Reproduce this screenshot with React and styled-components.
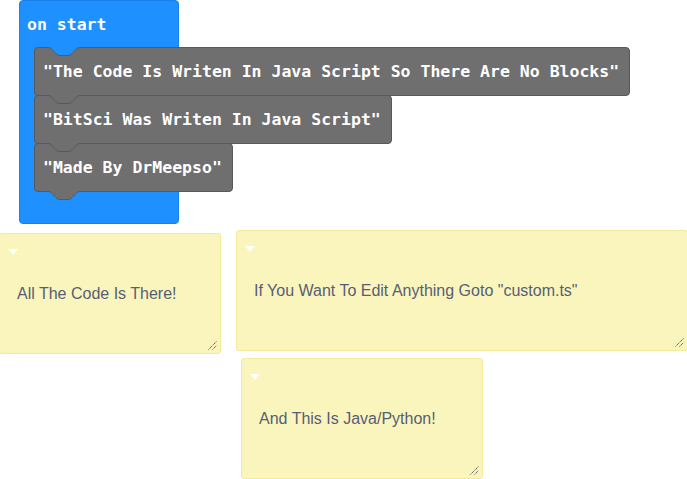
import React from "react";
import styled, { createGlobalStyle } from "styled-components";

const GlobalStyle = createGlobalStyle`
  html, body { margin: 0; padding: 0; background: #ffffff; }
  #root { width: 687px; height: 479px; }
`;

const Workspace = styled.div`
  position: relative;
  width: 687px;
  height: 479px;
  overflow: hidden;
  background: #ffffff;
`;

const EventBlock = styled.div`
  position: absolute;
  left: ${(p) => p.$x}px;
  top: ${(p) => p.$y}px;
  box-sizing: border-box;
  width: 160px;
  display: flex;
  flex-direction: column;
  align-items: flex-start;
  background: #1e90ff;
  border: 1px solid #1a80e6;
  border-radius: 4px;
`;

const EventHeader = styled.div`
  height: 46px;
  display: flex;
  align-items: center;
  padding-left: 7px;
  color: #ffffff;
  font-family: "DejaVu Sans Mono", "Liberation Mono", monospace;
  font-weight: bold;
  font-size: 16.5px;
  white-space: pre;
`;

const Stack = styled.div`
  display: flex;
  flex-direction: column;
  align-items: flex-start;
  margin-left: 14px;
  width: max-content;
`;

const Statement = styled.div`
  position: relative;
  box-sizing: border-box;
  height: 49px;
  display: flex;
  align-items: center;
  padding: 0 10px 0 8px;
  background: #6f6f6f;
  border: 1px solid #595959;
  border-radius: 4px;
  color: #ffffff;
  font-family: "DejaVu Sans Mono", "Liberation Mono", monospace;
  font-weight: bold;
  font-size: 16.5px;
  white-space: pre;

  & + & {
    margin-top: -1px;
  }
`;

const NotchSvg = styled.svg`
  position: absolute;
  left: 13px;
  top: ${(p) => (p.$bottom ? "100%" : "-1px")};
  z-index: 1;
  overflow: visible;
`;

const EventFooter = styled.div`
  height: 31px;
`;

const Comment = styled.div`
  position: absolute;
  left: ${(p) => p.$x}px;
  top: ${(p) => p.$y}px;
  width: ${(p) => p.$w}px;
  height: ${(p) => p.$h}px;
  box-sizing: border-box;
  display: flex;
  flex-direction: column;
  background: #faf5bd;
  border: 1px solid #f3ea9b;
  border-radius: 3px;
`;

const CommentBar = styled.div`
  box-sizing: border-box;
  height: 34px;
  padding: 15px 0 0 8px;
`;

const Collapse = styled.span`
  display: block;
  width: 0;
  height: 0;
  border-left: 5px solid transparent;
  border-right: 5px solid transparent;
  border-top: 6px solid #ffffff;
`;

const CommentText = styled.div`
  padding: 17px 17px 0;
  font-family: "Liberation Sans", Arial, sans-serif;
  font-size: 16px;
  line-height: 18px;
  color: #575e75;
  white-space: pre;
`;

const Grip = styled.svg`
  position: absolute;
  right: 3px;
  bottom: 3px;
`;

const CURVE =
  "c2 0 3 1 4 2 l4 4 c1 1 2 2 4 2 h8 c2 0 3 -1 4 -2 l4 -4 c1 -1 2 -2 4 -2";

function Notch({ fill, bottom }) {
  return (
    <NotchSvg width="32" height="10" $bottom={bottom}>
      <path d={`M0 0 V0.5 ${CURVE} V0 Z`} fill={fill} />
      <path d={`M0 0.5 ${CURVE}`} fill="none" stroke="#595959" strokeWidth="1" />
    </NotchSvg>
  );
}

function ResizeGrip() {
  return (
    <Grip width="9" height="9" viewBox="0 0 9 9">
      <path d="M0.5 8.5 L8.5 0.5 M4.5 8.5 L8.5 4.5" stroke="#444" strokeWidth="1" strokeDasharray="1.2 0.8" fill="none" />
    </Grip>
  );
}

const statements = [
  '"The Code Is Writen In Java Script So There Are No Blocks"',
  '"BitSci Was Writen In Java Script"',
  '"Made By DrMeepso"',
];

const comments = [
  { x: -1, y: 233, w: 222, h: 121, text: "All The Code Is There!" },
  { x: 236, y: 230, w: 452, h: 121, text: 'If You Want To Edit Anything Goto "custom.ts"' },
  { x: 241, y: 358, w: 242, h: 121, text: "And This Is Java/Python!" },
];

export default function App() {
  return (
    <>
      <GlobalStyle />
      <Workspace>
        <EventBlock $x={19} $y={0}>
          <EventHeader>on start</EventHeader>
          <Stack>
            {statements.map((s, i) => (
              <Statement key={i}>
                {i === 0 && <Notch fill="#1e90ff" />}
                {s}
                <Notch fill="#6f6f6f" bottom />
              </Statement>
            ))}
          </Stack>
          <EventFooter />
        </EventBlock>
        {comments.map((c, i) => (
          <Comment key={i} $x={c.x} $y={c.y} $w={c.w} $h={c.h}>
            <CommentBar>
              <Collapse />
            </CommentBar>
            <CommentText>{c.text}</CommentText>
            <ResizeGrip />
          </Comment>
        ))}
      </Workspace>
    </>
  );
}
